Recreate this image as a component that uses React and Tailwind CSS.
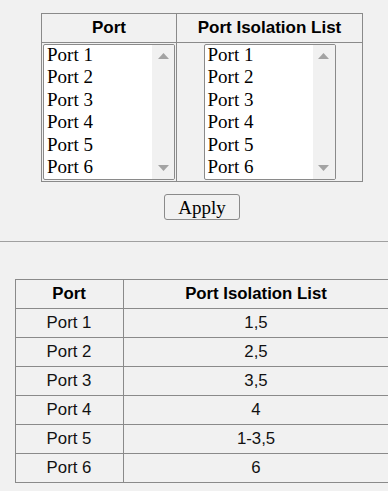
import React from 'react';

const ports = ['Port 1', 'Port 2', 'Port 3', 'Port 4', 'Port 5', 'Port 6'];

const isolation = [
  { port: 'Port 1', list: '1,5' },
  { port: 'Port 2', list: '2,5' },
  { port: 'Port 3', list: '3,5' },
  { port: 'Port 4', list: '4' },
  { port: 'Port 5', list: '1-3,5' },
  { port: 'Port 6', list: '6' },
];

const PortSelect = () => (
  <div className="flex h-[136px] w-[132px] overflow-hidden rounded-[2px] border border-[#8a8a8a] bg-white">
    <div className="-mt-[1px] flex-1 pl-[3px]">
      {ports.map((p) => (
        <div key={p} className="h-[22.4px] text-[19px] leading-[22.4px] text-black" style={{ fontFamily: '"Liberation Serif", serif' }}>
          {p}
        </div>
      ))}
    </div>
    {/* fake scrollbar */}
    <div className="flex w-[22px] flex-col items-center justify-between bg-[#f1f1f1] py-[8px]">
      <svg width="11" height="6" viewBox="0 0 11 6">
        <polygon points="0,6 5.5,0 11,6" fill="#a3a3a3" />
      </svg>
      <svg width="11" height="6" viewBox="0 0 11 6">
        <polygon points="0,0 11,0 5.5,6" fill="#a3a3a3" />
      </svg>
    </div>
  </div>
);

const App = () => {
  return (
    <div className="h-[491px] w-full overflow-hidden bg-[#f1f1f1]" style={{ fontFamily: '"Liberation Sans", Arial, sans-serif' }}>
      <div className="flex w-[404px] flex-col items-center">
        {/* Selection table */}
        <table className="mt-[13px] w-[322px] border-collapse">
          <thead>
            <tr>
              <th className="h-[29px] w-[135px] border border-[#8a8a8a] p-0 text-[17px] font-bold text-black">Port</th>
              <th className="h-[29px] border border-[#8a8a8a] p-0 text-[17px] font-bold text-black">Port Isolation List</th>
            </tr>
          </thead>
          <tbody>
            <tr>
              <td className="border border-[#8a8a8a] p-[1px]">
                <PortSelect />
              </td>
              <td className="border border-[#8a8a8a] p-[1px]">
                <div className="flex justify-center">
                  <PortSelect />
                </div>
              </td>
            </tr>
          </tbody>
        </table>

        <button
          className="mt-[12px] h-[26px] w-[76px] rounded-[3px] border border-[#8a8a8a] bg-[#f1f1f1] text-[19px] leading-none text-black"
          style={{ fontFamily: '"Liberation Serif", serif' }}
        >
          Apply
        </button>
      </div>

      <div className="mt-[21px] h-px w-[404px] bg-[#a0a0a0]" />

      {/* Current isolation table */}
      <div className="flex w-[404px] justify-center">
        <table className="mt-[37px] w-[375px] border-collapse text-[16.8px] text-[#111]">
          <thead>
            <tr>
              <th className="h-[29px] w-[108px] border border-[#8a8a8a] p-0 font-bold text-black">Port</th>
              <th className="h-[29px] border border-[#8a8a8a] p-0 font-bold text-black">Port Isolation List</th>
            </tr>
          </thead>
          <tbody>
            {isolation.map((row) => (
              <tr key={row.port}>
                <td className="h-[29px] border border-[#8a8a8a] p-0 text-center">{row.port}</td>
                <td className="h-[29px] border border-[#8a8a8a] p-0 text-center">{row.list}</td>
              </tr>
            ))}
          </tbody>
        </table>
      </div>
    </div>
  );
};

export default App;
